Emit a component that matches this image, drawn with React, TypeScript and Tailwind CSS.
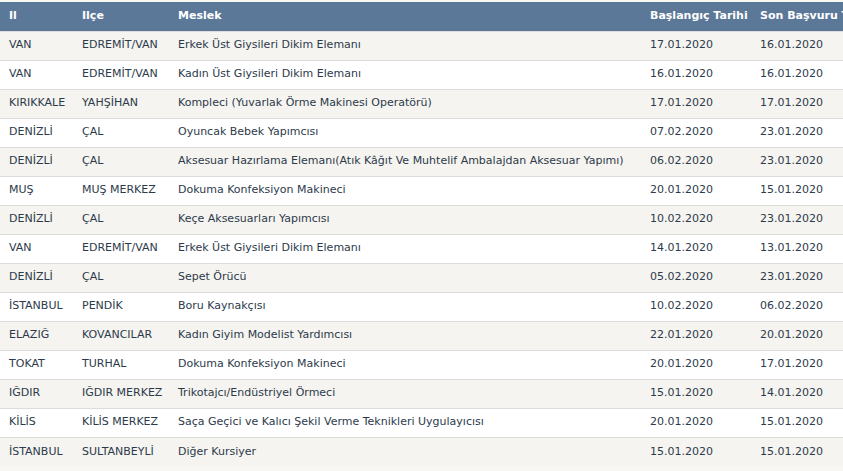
import React from "react";

type Row = [string, string, string, string, string];

const rows: Row[] = [
  ["VAN", "EDREMİT/VAN", "Erkek Üst Giysileri Dikim Elemanı", "17.01.2020", "16.01.2020"],
  ["VAN", "EDREMİT/VAN", "Kadın Üst Giysileri Dikim Elemanı", "16.01.2020", "16.01.2020"],
  ["KIRIKKALE", "YAHŞİHAN", "Kompleci (Yuvarlak Örme Makinesi Operatörü)", "17.01.2020", "17.01.2020"],
  ["DENİZLİ", "ÇAL", "Oyuncak Bebek Yapımcısı", "07.02.2020", "23.01.2020"],
  ["DENİZLİ", "ÇAL", "Aksesuar Hazırlama Elemanı(Atık Kâğıt Ve Muhtelif Ambalajdan Aksesuar Yapımı)", "06.02.2020", "23.01.2020"],
  ["MUŞ", "MUŞ MERKEZ", "Dokuma Konfeksiyon Makineci", "20.01.2020", "15.01.2020"],
  ["DENİZLİ", "ÇAL", "Keçe Aksesuarları Yapımcısı", "10.02.2020", "23.01.2020"],
  ["VAN", "EDREMİT/VAN", "Erkek Üst Giysileri Dikim Elemanı", "14.01.2020", "13.01.2020"],
  ["DENİZLİ", "ÇAL", "Sepet Örücü", "05.02.2020", "23.01.2020"],
  ["İSTANBUL", "PENDİK", "Boru Kaynakçısı", "10.02.2020", "06.02.2020"],
  ["ELAZIĞ", "KOVANCILAR", "Kadın Giyim Modelist Yardımcısı", "22.01.2020", "20.01.2020"],
  ["TOKAT", "TURHAL", "Dokuma Konfeksiyon Makineci", "20.01.2020", "17.01.2020"],
  ["IĞDIR", "IĞDIR MERKEZ", "Trikotajcı/Endüstriyel Örmeci", "15.01.2020", "14.01.2020"],
  ["KİLİS", "KİLİS MERKEZ", "Saça Geçici ve Kalıcı Şekil Verme Teknikleri Uygulayıcısı", "20.01.2020", "15.01.2020"],
  ["İSTANBUL", "SULTANBEYLİ", "Diğer Kursiyer", "15.01.2020", "15.01.2020"],
];

const headers = ["Il", "Ilçe", "Meslek", "Başlangıç Tarihi", "Son Başvuru Tarihi"];
const widths = ["w-[73px]", "w-[96px]", "w-[472px]", "w-[110px]", "w-[140px]"];

export default function App() {
  return (
    <div className="w-[843px] h-[471px] overflow-hidden bg-[#f7f6f3] pt-[2px] font-['DejaVu_Sans',Verdana,sans-serif] text-[11px]">
      <table className="w-[891px] table-fixed border-collapse">
        <thead>
          <tr className="bg-[#5b7899] text-white">
            {headers.map((h, i) => (
              <th key={h} className={`${widths[i]} h-[29px] pl-[9px] text-left font-bold whitespace-nowrap`}>
                {h}
              </th>
            ))}
          </tr>
        </thead>
        <tbody>
          {rows.map((r, i) => (
            <tr
              key={i}
              className={`${i % 2 === 0 ? "bg-[#f5f4f0]" : "bg-white"} border-t border-[#dcdcdc] text-[#2d3a4b]`}
            >
              {r.map((c, j) => (
                <td key={j} className="h-[29px] pl-[9px] whitespace-nowrap">
                  {c}
                </td>
              ))}
            </tr>
          ))}
        </tbody>
      </table>
    </div>
  );
}
